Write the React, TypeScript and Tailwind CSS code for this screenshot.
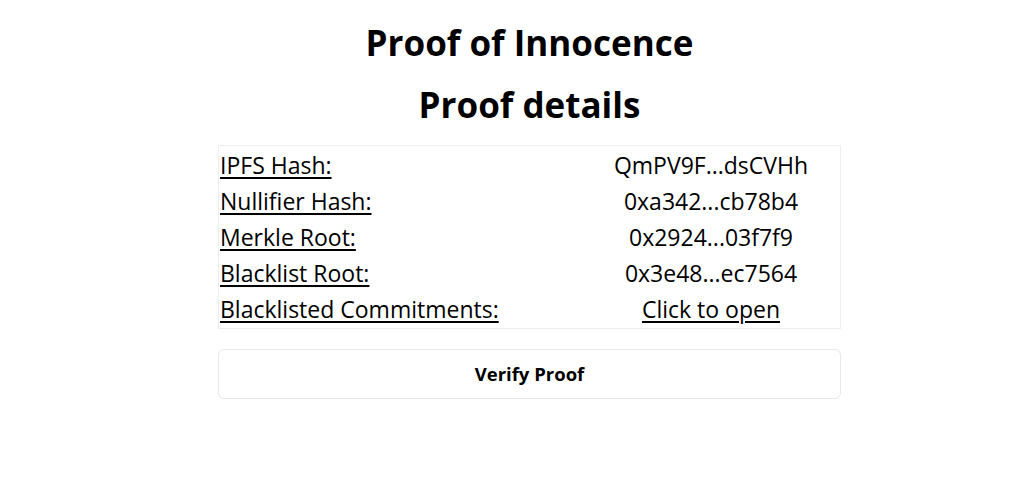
const rows = [
  { label: "IPFS Hash:", value: "QmPV9F...dsCVHh" },
  { label: "Nullifier Hash:", value: "0xa342...cb78b4" },
  { label: "Merkle Root:", value: "0x2924...03f7f9" },
  { label: "Blacklist Root:", value: "0x3e48...ec7564" },
];

export default function App() {
  return (
    <div className="min-h-[486px] bg-white pl-[35px] text-black font-['Open_Sans','Noto_Sans',sans-serif]">
      <div className="mx-auto flex w-[623px] flex-col items-center pt-[22px]">
        <h1 className="text-[35px] font-bold leading-[42px]">Proof of Innocence</h1>
        <h2 className="mt-[20px] text-[35px] font-bold leading-[42px]">Proof details</h2>

        <div className="mt-[19px] w-full border border-[#eeeeee] py-[1px] text-[23px]">
          {rows.map((r) => (
            <div key={r.label} className="grid h-[36px] grid-cols-[363px_1fr] items-center">
              <span className="pl-[1px] underline underline-offset-[3px]">{r.label}</span>
              <span className="text-center">{r.value}</span>
            </div>
          ))}
          <div className="grid h-[36px] grid-cols-[363px_1fr] items-center">
            <span className="pl-[1px] underline underline-offset-[3px]">Blacklisted Commitments:</span>
            <span className="text-center underline underline-offset-[3px]">Click to open</span>
          </div>
        </div>

        <button className="mt-[20px] h-[50px] w-full rounded-md border border-[#e8e8e8] bg-white text-[18.5px] font-bold">
          Verify Proof
        </button>
      </div>
    </div>
  );
}
